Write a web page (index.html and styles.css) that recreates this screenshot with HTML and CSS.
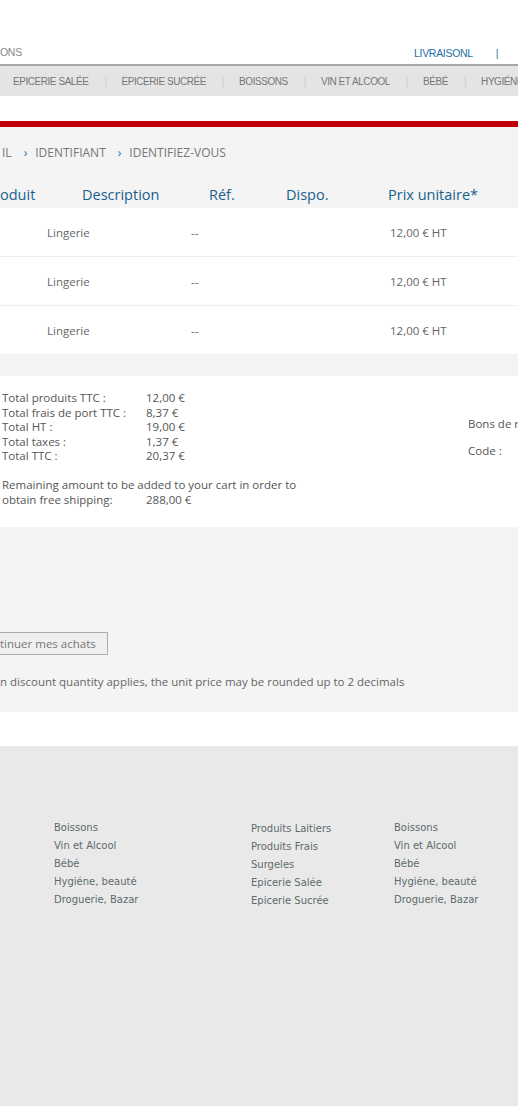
FILE: index.html
```html
<!DOCTYPE html>
<html lang="fr">
<head>
<meta charset="utf-8">
<title>Panier</title>
<link rel="stylesheet" href="styles.css">
</head>
<body>
<header class="top">
  <span class="top-left">ONS</span>
  <div class="top-right">
    <a class="top-link">LIVRAISONL</a>
    <span class="top-sep">|</span>
  </div>
</header>
<nav class="menu">
  <a class="menu-item">EPICERIE SALÉE</a><span class="menu-sep">|</span>
  <a class="menu-item">EPICERIE SUCRÉE</a><span class="menu-sep">|</span>
  <a class="menu-item">BOISSONS</a><span class="menu-sep">|</span>
  <a class="menu-item">VIN ET ALCOOL</a><span class="menu-sep">|</span>
  <a class="menu-item">BÉBÉ</a><span class="menu-sep">|</span>
  <a class="menu-item">HYGIÉNE</a>
</nav>
<div class="redbar"></div>
<main class="content">
  <div class="crumbs">
    <span>IL</span><span class="chev">›</span><span>IDENTIFIANT</span><span class="chev">›</span><span>IDENTIFIEZ-VOUS</span>
  </div>
  <div class="thead">
    <span>oduit</span><span>Description</span><span>Réf.</span><span>Dispo.</span><span>Prix unitaire*</span>
  </div>
  <div class="rows">
    <div class="row"><span></span><span>Lingerie</span><span>--</span><span>12,00 € HT</span></div>
    <div class="row"><span></span><span>Lingerie</span><span>--</span><span>12,00 € HT</span></div>
    <div class="row"><span></span><span>Lingerie</span><span>--</span><span>12,00 € HT</span></div>
  </div>
  <div class="strip"></div>
  <section class="totals">
    <div class="totals-left">
      <dl class="sums">
        <dt>Total produits TTC :</dt><dd>12,00 €</dd>
        <dt>Total frais de port TTC :</dt><dd>8,37 €</dd>
        <dt>Total HT :</dt><dd>19,00 €</dd>
        <dt>Total taxes :</dt><dd>1,37 €</dd>
        <dt>Total TTC :</dt><dd>20,37 €</dd>
      </dl>
      <p class="remain">Remaining amount to be added to your cart in order to<br><span class="remain-label">obtain free shipping:</span>288,00 €</p>
    </div>
    <div class="vouchers">
      <div class="v-title">Bons de r</div>
      <div class="v-code"><span>Code :</span><span class="v-input"></span></div>
    </div>
  </section>
  <section class="actions">
    <button class="btn">tinuer mes achats</button>
    <p class="note">n discount quantity applies, the unit price may be rounded up to 2 decimals</p>
  </section>
</main>
<footer class="foot">
  <ul class="fcol c1">
    <li>Boissons</li><li>Vin et Alcool</li><li>Bébé</li><li>Hygiéne, beauté</li><li>Droguerie, Bazar</li>
  </ul>
  <ul class="fcol c2">
    <li>Produits Laitiers</li><li>Produits Frais</li><li>Surgeles</li><li>Epicerie Salée</li><li>Epicerie Sucrée</li>
  </ul>
  <ul class="fcol c3">
    <li>Boissons</li><li>Vin et Alcool</li><li>Bébé</li><li>Hygiéne, beauté</li><li>Droguerie, Bazar</li>
  </ul>
</footer>
</body>
</html>
```

FILE: styles.css
```css
html, body { margin: 0; padding: 0; }
body {
  background: #ffffff;
  font-family: "Open Sans", "Noto Sans", sans-serif;
  overflow: hidden;
  width: 518px;
}

.top {
  height: 64px;
  display: flex;
  align-items: flex-end;
  font-family: "Liberation Sans", Arial, sans-serif;
  font-size: 10.5px;
  letter-spacing: -0.3px;
}
.top-left { color: #888; padding-bottom: 6px; }
.top-right { margin-left: auto; display: flex; padding-bottom: 5px; width: 104px; }
.top-link { color: #1d6fa5; }
.top-sep { color: #1d6fa5; margin-left: 23px; }

.menu {
  border-top: 2px solid #a8a8a8;
  background: #e4e4e4;
  height: 30px;
  display: flex;
  align-items: center;
  white-space: nowrap;
  font-family: "Liberation Sans", Arial, sans-serif;
  font-size: 10px;
  letter-spacing: -0.45px;
  color: #777;
  padding-left: 13px;
}
.menu-item { flex-shrink: 0; }
.menu-sep { color: #c8c8c8; margin: 0 15px 0 16px; font-size: 10px; flex-shrink: 0; }

.redbar {
  margin-top: 25px;
  height: 6px;
  background: #c00000;
}

.content { background: #f4f4f4; }

.crumbs {
  height: 51px;
  display: flex;
  align-items: center;
  gap: 8px;
  font-size: 12px;
  color: #777;
  padding-left: 2px;
}
.crumbs .chev { color: #1d6fa5; margin-left: 4px; }

.thead {
  display: grid;
  grid-template-columns: 82px 127px 77px 102px auto;
  height: 30px;
  font-size: 14.5px;
  color: #1a5f8e;
  line-height: 34px;
}

.rows { background: #fff; }
.row {
  display: grid;
  grid-template-columns: 47px 144px 199px auto;
  height: 48px;
  align-items: center;
  font-size: 11.5px;
  color: #666;
  border-bottom: 1px solid #eeeeee;
}
.row:last-child { border-bottom: none; }

.strip { height: 22px; background: #f4f4f4; }

.totals {
  background: #fff;
  height: 151px;
  display: flex;
  font-size: 11.5px;
  color: #555;
  padding-left: 2px;
  box-sizing: border-box;
  padding-top: 15px;
}
.totals-left { width: 466px; flex-shrink: 0; }
.sums {
  display: grid;
  grid-template-columns: 144px auto;
  margin: 0;
  line-height: 14.5px;
}
.sums dt, .sums dd { margin: 0; }
.remain { margin: 13px 0 0; line-height: 15px; }
.remain-label { display: inline-block; width: 144px; }

.vouchers { padding-top: 25px; white-space: nowrap; }
.v-title { line-height: 16px; }
.v-code { display: flex; align-items: center; margin-top: 7px; gap: 16px; }
.v-input { display: inline-block; width: 10px; height: 22px; border-left: 1px solid #ddd; }

.actions {
  height: 185px;
  padding-top: 105px;
  box-sizing: border-box;
}
.btn {
  display: block;
  font-family: "Open Sans", "Noto Sans", sans-serif;
  font-size: 11.5px;
  color: #777;
  background: #efefef;
  border: 1px solid #adadad;
  border-left: none;
  height: 23px;
  width: 108px;
  padding: 0;
  text-align: left;
  margin: 0;
}
.note {
  margin: 19px 0 0;
  font-size: 11.5px;
  color: #666;
  white-space: nowrap;
}

.foot {
  margin-top: 34px;
  background: #e9e9e9;
  height: 360px;
  display: flex;
  padding-top: 73px;
  box-sizing: border-box;
  font-family: "DejaVu Sans", Verdana, sans-serif;
  font-size: 10px;
  color: #5e6b6b;
}
.fcol { list-style: none; margin: 0; padding: 0; line-height: 18px; }
.c1 { margin-left: 54px; width: 197px; }
.c2 { width: 143px; margin-top: 1px; }
```
